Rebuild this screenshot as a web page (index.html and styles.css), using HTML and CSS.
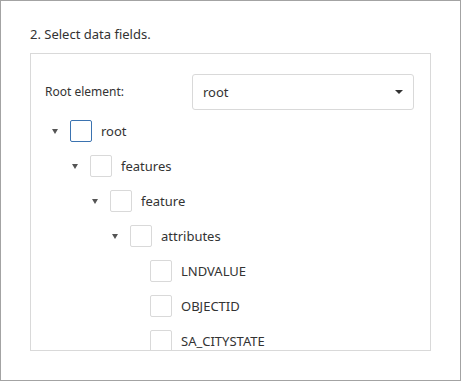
FILE: index.html
```html
<!DOCTYPE html>
<html>
<head>
<meta charset="utf-8">
<link rel="stylesheet" href="styles.css">
</head>
<body>
<div class="frame">
  <div class="title">2. Select data fields.</div>
  <div class="panel">
    <div class="root-row">
      <div class="root-label">Root element:</div>
      <div class="select">
        <span class="select-value">root</span>
        <span class="select-arrow"></span>
      </div>
    </div>
    <div class="tree">
      <div class="node lvl0"><span class="twisty"></span><span class="check focused"></span><span class="name">root</span></div>
      <div class="node lvl1"><span class="twisty"></span><span class="check"></span><span class="name">features</span></div>
      <div class="node lvl2"><span class="twisty"></span><span class="check"></span><span class="name">feature</span></div>
      <div class="node lvl3"><span class="twisty"></span><span class="check"></span><span class="name">attributes</span></div>
      <div class="node lvl4"><span class="spacer"></span><span class="check"></span><span class="name">LNDVALUE</span></div>
      <div class="node lvl4"><span class="spacer"></span><span class="check"></span><span class="name">OBJECTID</span></div>
      <div class="node lvl4"><span class="spacer"></span><span class="check"></span><span class="name">SA_CITYSTATE</span></div>
    </div>
  </div>
</div>
</body>
</html>
```

FILE: styles.css
```css
html, body {
  margin: 0;
  padding: 0;
  background: #ffffff;
}

body {
  font-family: "Noto Sans", "Open Sans", sans-serif;
  color: #333333;
}

.frame {
  width: 461px;
  height: 381px;
  box-sizing: border-box;
  border: 1px solid #a3a3a3;
  padding: 23px 0 0 29px;
  overflow: hidden;
}

.title {
  font-size: 13px;
  line-height: 20px;
  height: 20px;
  color: #333333;
}

.panel {
  margin-top: 9px;
  width: 401px;
  height: 298px;
  box-sizing: border-box;
  border: 1px solid #d9d9d9;
  overflow: hidden;
  padding: 20px 0 0 14px;
}

.root-row {
  display: flex;
  align-items: center;
  height: 36px;
}

.root-label {
  width: 147px;
  font-size: 12px;
  line-height: 16px;
  color: #333333;
}

.select {
  width: 222px;
  height: 36px;
  box-sizing: border-box;
  border: 1px solid #d9d9d9;
  border-radius: 3px;
  display: flex;
  align-items: center;
  justify-content: space-between;
  padding: 0 10px 0 10px;
}

.select-value {
  font-size: 13px;
  color: #333333;
}

.select-arrow {
  width: 0;
  height: 0;
  border-left: 4px solid transparent;
  border-right: 4px solid transparent;
  border-top: 4px solid #333333;
}

.tree {
  margin-top: 10px;
  margin-left: 5px;
  display: flex;
  flex-direction: column;
  gap: 13px;
}

.node {
  display: flex;
  align-items: center;
  height: 22px;
}

.lvl1 { padding-left: 20px; }
.lvl2 { padding-left: 40px; }
.lvl3 { padding-left: 60px; }
.lvl4 { padding-left: 80px; }

.twisty,
.spacer {
  width: 20px;
  height: 22px;
  flex: none;
  position: relative;
}

.twisty::before {
  content: "";
  position: absolute;
  left: 2px;
  top: 9px;
  width: 0;
  height: 0;
  border-left: 3px solid transparent;
  border-right: 3px solid transparent;
  border-top: 5px solid #555555;
}

.check {
  width: 22px;
  height: 22px;
  box-sizing: border-box;
  border: 1px solid #d9d9d9;
  border-radius: 2px;
  flex: none;
}

.check.focused {
  border-color: #3b73b0;
}

.name {
  margin-left: 9px;
  font-size: 13px;
  color: #333333;
  white-space: nowrap;
}
```
